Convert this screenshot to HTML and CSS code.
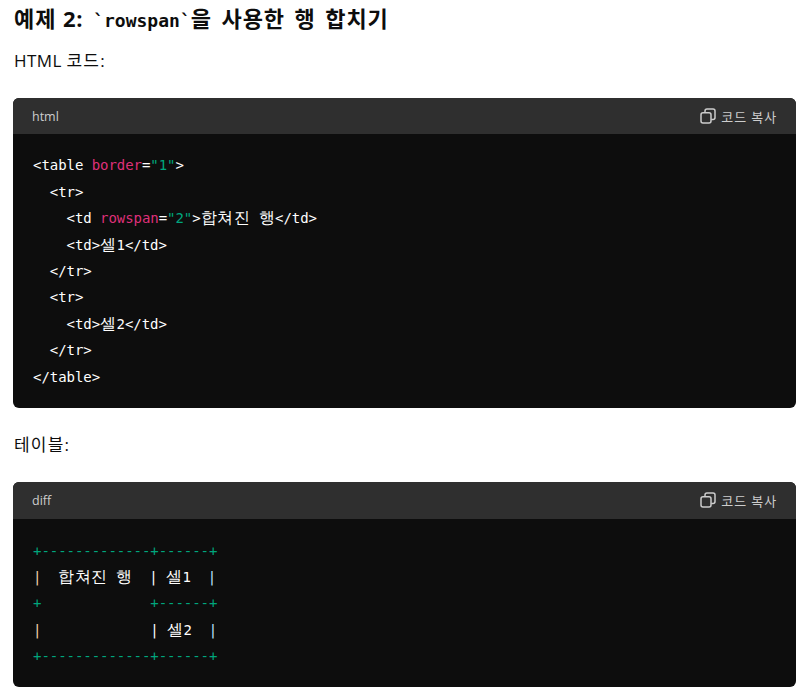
FILE: index.html
```html
<!DOCTYPE html>
<html lang="ko">
<head>
<meta charset="utf-8">
<title>rowspan</title>
<link rel="stylesheet" href="styles.css">
</head>
<body>
<h3 class="title"><span class="lead">예제 2:</span> <code class="inline">`rowspan`</code>을 사용한 행 합치기</h3>
<p class="para">HTML <span class="ko">코드:</span></p>
<section class="block">
  <header class="bar">
    <span class="lang">html</span>
    <span class="copy">
      <svg class="icon" width="16" height="16" viewBox="0 0 16 16" fill="none" stroke="currentColor" stroke-width="1.5"><rect x="1" y="4.8" width="10" height="10.2" rx="2"/><path d="M5 4.5V3a2 2 0 0 1 2-2h6a2 2 0 0 1 2 2v6.5a2 2 0 0 1-2 2h-1.8"/></svg>
      코드 복사
    </span>
  </header>
<pre class="code"><code><span class="w">&lt;table</span> <span class="r">border</span><span class="w">=</span><span class="g">"1"</span><span class="w">&gt;</span>
  <span class="w">&lt;tr&gt;</span>
    <span class="w">&lt;td</span> <span class="r">rowspan</span><span class="w">=</span><span class="g">"2"</span><span class="w">&gt;<span class="k">합쳐진</span> <span class="k">행</span>&lt;/td&gt;</span>
    <span class="w">&lt;td&gt;<span class="k">셀</span>1&lt;/td&gt;</span>
  <span class="w">&lt;/tr&gt;</span>
  <span class="w">&lt;tr&gt;</span>
    <span class="w">&lt;td&gt;<span class="k">셀</span>2&lt;/td&gt;</span>
  <span class="w">&lt;/tr&gt;</span>
<span class="w">&lt;/table&gt;</span></code></pre>
</section>
<p class="para second"><span class="ko">테이블:</span></p>
<section class="block">
  <header class="bar">
    <span class="lang">diff</span>
    <span class="copy">
      <svg class="icon" width="16" height="16" viewBox="0 0 16 16" fill="none" stroke="currentColor" stroke-width="1.5"><rect x="1" y="4.8" width="10" height="10.2" rx="2"/><path d="M5 4.5V3a2 2 0 0 1 2-2h6a2 2 0 0 1 2 2v6.5a2 2 0 0 1-2 2h-1.8"/></svg>
      코드 복사
    </span>
  </header>
<pre class="code diff"><code><span class="g">+-------------+------+</span>
<span class="o">|</span><span class="w">  <span class="k">합쳐진</span> <span class="k">행</span>  </span><span class="w">|</span><span class="w"> <span class="k">셀</span>1  </span><span class="b">|</span>
<span class="g">+             +------+</span>
<span class="o">|</span><span class="w">             </span><span class="w">|</span><span class="w"> <span class="k">셀</span>2  </span><span class="b">|</span>
<span class="g">+-------------+------+</span></code></pre>
</section>
</body>
</html>
```
FILE: styles.css
```css
html, body { margin: 0; padding: 0; background: #fff; }
body {
  padding: 0 15px 0 13px;
  font-family: "Open Sans", "Noto Sans CJK KR", sans-serif;
  color: #0d0d0d;
}
.title {
  margin: 0;
  padding: 1px 0 0 1px;
  font-size: 22px;
  line-height: 34px;
  letter-spacing: 0.9px;
  word-spacing: 3px;
  font-weight: 700;
}
.lead { word-spacing: 0; }
.inline {
  font-family: "DejaVu Sans Mono", "Noto Sans CJK KR", monospace;
  font-size: 18px;
  font-weight: 700;
  letter-spacing: 0;
}
.para {
  margin: 10px 0 0;
  padding-left: 1px;
  font-size: 17px;
  line-height: 26px;
  letter-spacing: 0.4px;
}
.ko { letter-spacing: 1.2px; }
.second { margin-top: 24.6px; }
.block { margin-top: 24px; border-radius: 6px; background: #0d0d0d; overflow: hidden; }
.bar {
  height: 36.4px;
  padding: 0 19px;
  display: flex;
  align-items: center;
  justify-content: space-between;
  background: #2f2f2f;
  color: #cdcdcd;
  font-size: 12.5px;
}
.copy { display: flex; align-items: center; gap: 5px; font-size: 13px; letter-spacing: 0.9px; }
.icon { flex: none; }
.code {
  margin: 0;
  padding: 18px 20px 17.6px;
  font-family: "DejaVu Sans Mono", "Noto Sans CJK KR", monospace;
  font-size: 14px;
  line-height: 26.4px;
  letter-spacing: -0.05px;
  font-weight: 400;
}
.diff { padding-top: 19px; }
.k { font-size: 15.5px; letter-spacing: 0.5px; }
.w { color: #fff; }
.r { color: #df3079; }
.g { color: #00a67d; }
.o { color: #f6d5ad; }
.b { color: #bfe3ff; }
```
